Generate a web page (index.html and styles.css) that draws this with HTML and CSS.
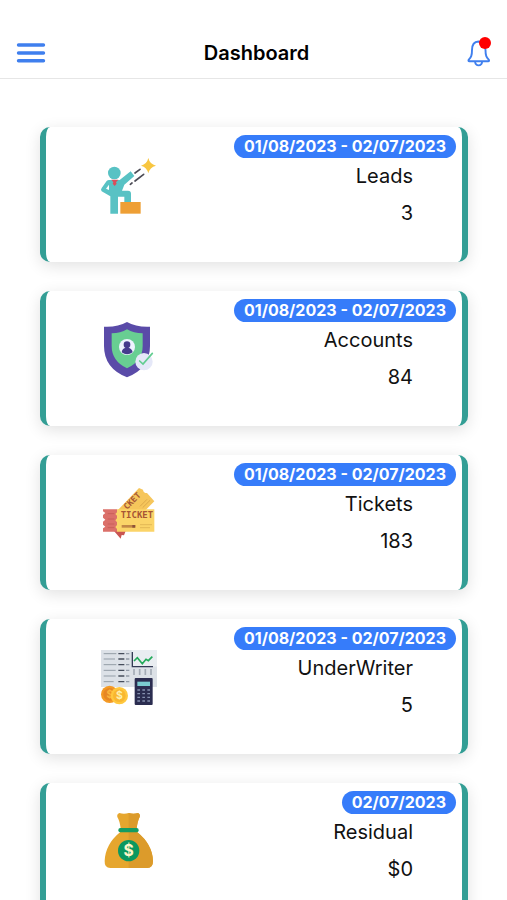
FILE: index.html
```
<!DOCTYPE html>
<html lang="en">
<head>
  <meta charset="UTF-8">
  <meta name="viewport" content="width=device-width, initial-scale=1.0">
  <link rel="stylesheet" href="styles.css">
  <title>Dashboard</title>
</head>
<body>
  <header class="topbar">
    <button type="button" class="icon-btn" aria-label="Menu">
      <svg width="30" height="20" viewBox="0 0 30 20" fill="none" stroke="#3f7fee" stroke-width="3.4" stroke-linecap="round">
        <path d="M2.500 2h25M2.500 10h25M2.500 17.800h25"/>
      </svg>
    </button>
    <h1>Dashboard</h1>
    <button type="button" class="icon-btn" aria-label="Notifications">
      <svg width="24" height="28" viewBox="0 0 24 28" fill="none" stroke="#3f7fee" stroke-width="1.900" stroke-linejoin="round">
        <path d="M11.500 2.500c-4.500.3-6.500 4-6.500 8.500 0 6-1 7.300-3.200 9.700-.7.900-.3 1.600.6 1.600h18.700c1 0 1.300-.8.600-1.600-2.200-2.400-3.200-3.700-3.200-9.700 0-4.500-2.500-8.200-7-8.500z"/>
        <path d="M8 22.500c.3 2.500 1.600 3.900 3.600 3.900s3.300-1.400 3.600-3.900"/>
      </svg>
      <span class="dot"></span>
    </button>
  </header>

  <main class="cards">
    <!-- Leads -->
    <section class="card">
      <svg class="card-icon" viewBox="30 36 168 168" aria-hidden="true">
        <g fill="#58c2c4">
          <circle cx="73" cy="84" r="19"/>
          <path d="M57 105h32l33-26 11 14-30 26-7 18h18q9 0 9 9v26h-20v-17H84v51H61v-52L35 139q-4-4 0-10l15-21q3-3 7-3z"/>
        </g>
        <path d="M48 131l9-12v16z" fill="#fff"/>
        <path d="M64 104h21l-7 8 2 4-6 7-6-7 2-4z" fill="#d94f5c"/>
        <path d="M91 171h61v35H91z" fill="#ee9f35"/>
        <path d="M175 39q4 18 23 23-19 5-23 23-4-18-22-23 18-5 22-23z" fill="#f8c640"/>
        <path d="M135 84l15-11M135 108l26-20M121 118l5-4" stroke="#4c4c56" stroke-width="5" stroke-linecap="round"/>
      </svg>
      <div class="card-info">
        <span class="date">01/08/2023 - 02/07/2023</span>
        <h2>Leads</h2>
        <p>3</p>
      </div>
    </section>

    <!-- Accounts -->
    <section class="card">
      <svg class="card-icon" viewBox="30 33 168 168" aria-hidden="true">
        <path d="M111 36q28 16 69 14v58q0 67-69 94-69-27-69-94V50q41 2 69-14z" fill="#5a4ba8"/>
        <path d="M111 58q20 12 47 12v38q0 45-47 67-46-22-46-67V70q27 0 46-12z" fill="#68ce92"/>
        <circle cx="111" cy="111" r="24" fill="#eef3ff"/>
        <circle cx="111" cy="104" r="10" fill="#453b8d"/>
        <path d="M95 127q1-14 16-14t17 14q-17 12-33 0z" fill="#453b8d"/>
        <circle cx="162" cy="155" r="26" fill="#e5e8f8"/>
        <path d="M149 153l10 9 28-32" fill="none" stroke="#62cd91" stroke-width="5" stroke-linecap="round"/>
      </svg>
      <div class="card-info">
        <span class="date">01/08/2023 - 02/07/2023</span>
        <h2>Accounts</h2>
        <p>84</p>
      </div>
    </section>

    <!-- Tickets -->
    <section class="card">
      <svg class="card-icon" viewBox="30 30 168 168" aria-hidden="true">
        <path d="M72 168l20 23 3-11 7 1 5-13z" fill="#c95552"/>
        <path d="M82 107l65-68 12 5q1 10 12 10l22 25-27 27z" fill="#f6c65b"/>
        <path d="M150 94l21-21M158 98l22-22" stroke="#dda94a" stroke-width="3"/>
        <text class="ticket-text" transform="translate(111 105) rotate(-45)" font-size="25">CKET</text>
        <path d="M39 103h42v67H39v-10l7-5-7-6v-9l7-6-7-6v-8l7-6-7-5z" fill="#db706a"/>
        <path d="M53 116h20M53 132h20M53 147h20M53 158h20" stroke="#c95f5a" stroke-width="3"/>
        <path d="M81 103h112v67H81v-8l-5-6 5-6v-8l-5-6 5-6v-8l-5-5 5-5z" fill="#fbd468"/>
        <text class="ticket-text" x="92" y="130" font-size="27">TICKET</text>
        <path d="M95 154h42" stroke="#c38846" stroke-width="8"/>
        <path d="M127 154h8" stroke="#8d5439" stroke-width="8"/>
        <path d="M150 149h36M150 158h30" stroke="#d8aa4c" stroke-width="2"/>
      </svg>
      <div class="card-info">
        <span class="date">01/08/2023 - 02/07/2023</span>
        <h2>Tickets</h2>
        <p>183</p>
      </div>
    </section>

    <!-- UnderWriter -->
    <section class="card">
      <svg class="card-icon" viewBox="30 33 168 168" aria-hidden="true">
        <path d="M33 36h168v111H33z" fill="#dce1e7"/>
        <path d="M41 47h38M41 63h34M41 80h38M41 97h36M41 114h36M41 131h30" stroke="#939da7" stroke-width="3"/>
        <path d="M85 47h18M85 63h18M85 80h18M85 97h18M85 114h18M85 131h18" stroke="#454d5b" stroke-width="4"/>
        <path d="M108 47h10M108 63h10M108 80h10M108 97h10M108 114h10M108 131h10" stroke="#919aa6" stroke-width="4"/>
        <path d="M125 36h76v50h-76z" fill="#e9edf1"/>
        <path d="M127 42v44h62" fill="none" stroke="#343b55" stroke-width="4"/>
        <path d="M132 69l10-10 15 18 11-13 7 4 12-12" fill="none" stroke="#23aa59" stroke-width="5"/>
        <path d="M132 94v18M149 94v18M166 94v18M183 94v18" stroke="#919aa6" stroke-width="5" stroke-dasharray="4 2"/>
        <circle cx="59" cy="169" r="26" fill="#f49a25"/>
        <circle cx="59" cy="169" r="19" fill="#e78724"/>
        <text x="59" y="180" class="coin-text" font-size="30" fill="#fbb63d">$</text>
        <circle cx="88" cy="173" r="26" fill="#ffc83f"/>
        <circle cx="88" cy="173" r="19" fill="#f9b730"/>
        <text x="88" y="184" class="coin-text" font-size="31" fill="#fff0ae">$</text>
        <rect x="134" y="120" width="54" height="81" rx="3" fill="#2b2d50"/>
        <path d="M142 131h38v13h-38z" fill="#7bcbd0"/>
        <path d="M142 156h38M142 167h38M142 178h38M142 189h38" stroke="#8590ae" stroke-width="4" stroke-dasharray="8 7"/>
      </svg>
      <div class="card-info">
        <span class="date">01/08/2023 - 02/07/2023</span>
        <h2>UnderWriter</h2>
        <p>5</p>
      </div>
    </section>

    <!-- Residual -->
    <section class="card">
      <svg class="card-icon" viewBox="30 39 168 168" aria-hidden="true">
        <path d="M88 39q14 4 28 0 15 4 28 0 8 4 5 12-6 11-9 34l2 12q45 36 47 86 0 21-17 21H61q-18 0-17-21 2-50 46-86l2-12q-3-23-10-34-2-9 6-12z" fill="#e6a62e"/>
        <path d="M116 39q15 4 28 0 8 4 5 12-6 11-9 34l2 12q45 36 47 86 0 21-17 21h-56z" fill="#dc9b2b"/>
        <rect x="85" y="84" width="61" height="13" rx="6" fill="#159c62"/>
        <circle cx="116" cy="152" r="32" fill="#0b9860"/>
        <text x="116" y="168" class="coin-text" font-size="47" fill="#fff5c9">$</text>
      </svg>
      <div class="card-info">
        <span class="date">02/07/2023</span>
        <h2>Residual</h2>
        <p>$0</p>
      </div>
    </section>
  </main>
</body>
</html>
```
FILE: styles.css
```
*{
  margin: 0;
  padding: 0;
  box-sizing: border-box;
}
body{
  height: 100vh;
  display: flex;
  flex-direction: column;
  overflow: hidden;
  background-color: #fff;
  color: #111;
  font-family: Inter, Roboto, sans-serif;
}

/* top bar */
.topbar{
  flex: none;
  display: flex;
  justify-content: space-between;
  align-items: center;
  padding: 27px 16px 0;
  height: 79px;
  border-bottom: 1px solid #e6e6e6;
}
.topbar h1{
  font-size: 20px;
  font-weight: 600;
  color: #000;
}
.icon-btn{
  position: relative;
  display: flex;
  border: none;
  background: none;
  cursor: pointer;
}
.dot{
  position: absolute;
  top: -2px;
  right: 0;
  width: 12px;
  height: 12px;
  border-radius: 50%;
  background-color: #f00;
}

/* cards */
.cards{
  flex: 1;
  display: flex;
  flex-direction: column;
  gap: 29px;
  padding: 48px 39px 29px 40px;
  overflow-y: auto;
  scrollbar-width: none;
}
.card{
  flex: none;
  display: flex;
  justify-content: space-between;
  align-items: flex-start;
  min-height: 135px;
  padding-left: 54px;
  border-left: 6px solid #339e95;
  border-right: 6px solid #339e95;
  border-radius: 10px;
  background-color: #fff;
  box-shadow: 0 4px 16px rgba(0, 0, 0, 0.12);
}
.card-icon{
  flex: none;
  width: 56px;
  height: 56px;
  margin-top: 30px;
  overflow: visible;
}
.card-info{
  display: flex;
  flex-direction: column;
  align-items: flex-end;
  padding-top: 8px;
}
.date{
  margin-right: 6px;
  padding: 0 10px;
  border-radius: 12px;
  background-color: #367cfa;
  color: #fff;
  font-size: 16px;
  font-weight: 700;
  line-height: 23px;
}
.card h2, .card p{
  margin-right: 49px;
  font-size: 20px;
  font-weight: 400;
  line-height: 37px;
}

/* lettering inside the icons */
.ticket-text{
  font-family: "DejaVu Sans Mono", monospace;
  font-weight: 700;
  fill: #a75534;
}
.coin-text{
  font-family: Inter, sans-serif;
  font-weight: 700;
  text-anchor: middle;
}
```
